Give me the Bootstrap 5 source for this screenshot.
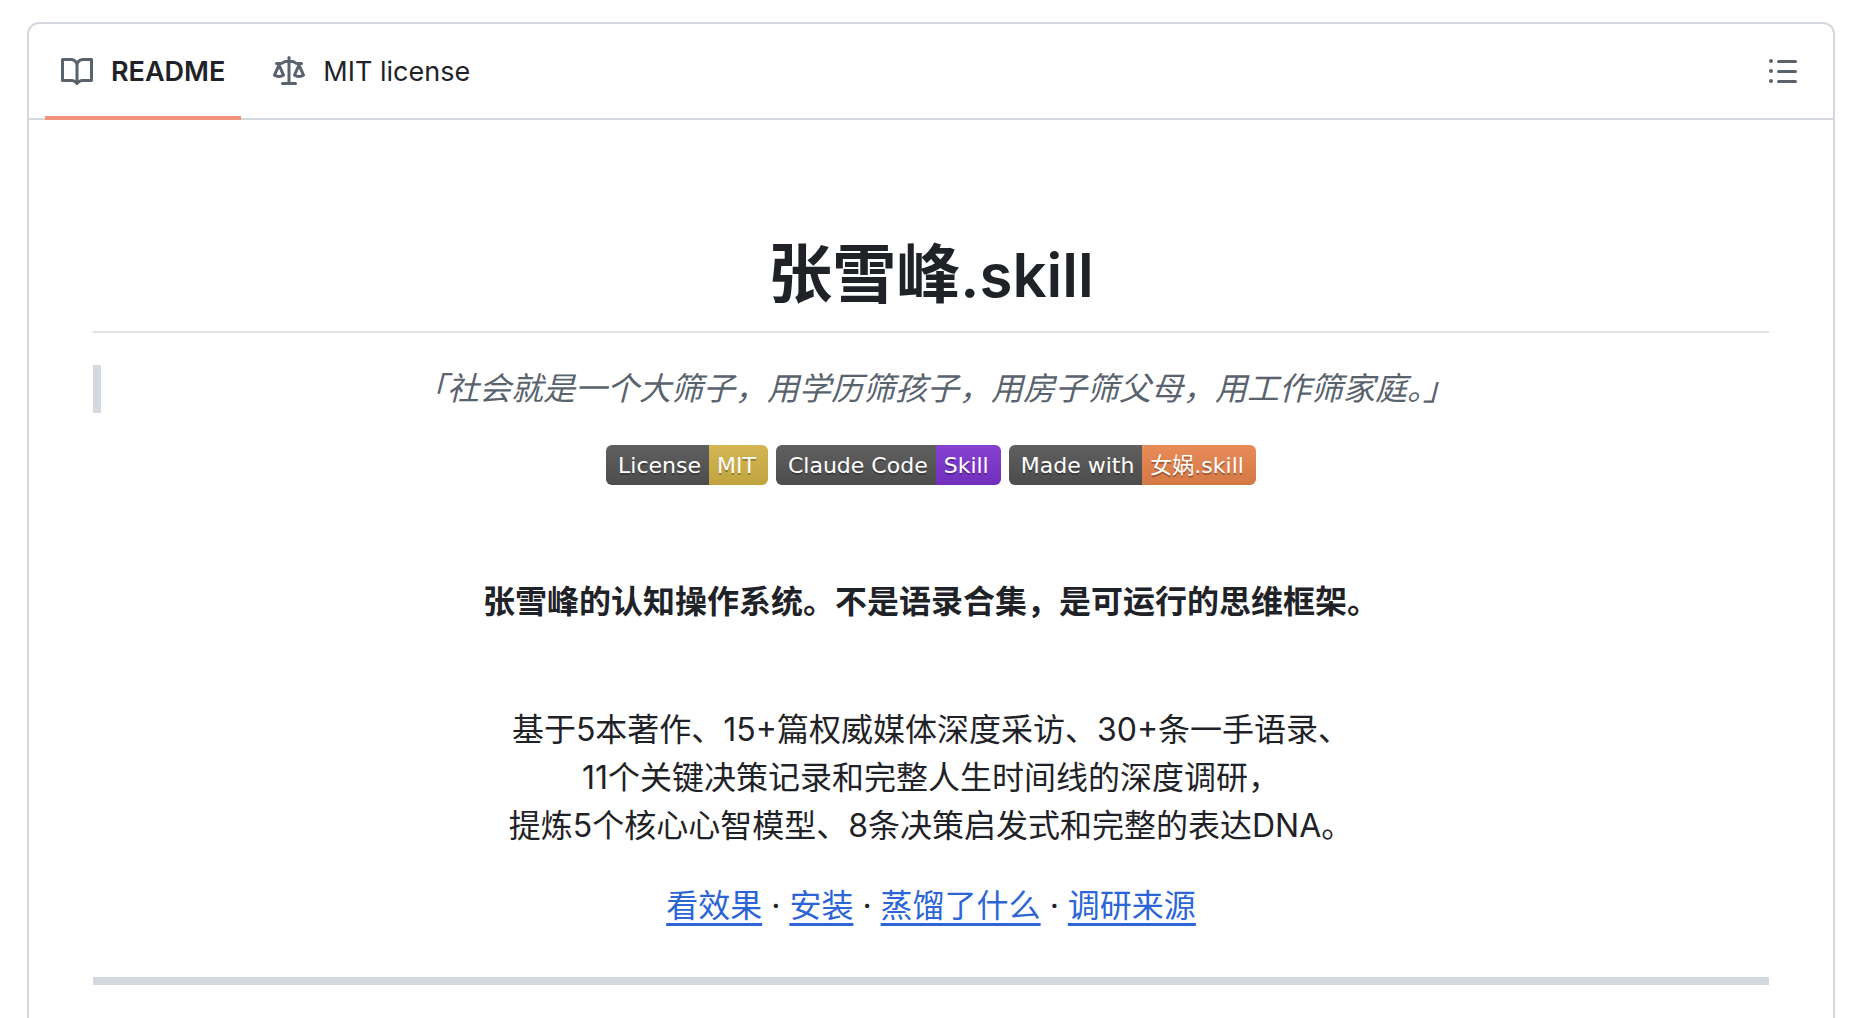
<!DOCTYPE html>
<html lang="zh-CN">
<head>
<meta charset="utf-8">
<meta name="viewport" content="width=device-width, initial-scale=1">
<title>张雪峰.skill</title>
<link href="https://cdn.jsdelivr.net/npm/bootstrap@5.3.0/dist/css/bootstrap.min.css" rel="stylesheet">
<style>
  body { font-family: Inter, "Noto Sans CJK SC", sans-serif; font-size: 32px; line-height: 48px; color: #1f2328; background: #fff; }
  .page-wrap { padding: 22px 25px 0 27px; }
  .readme-box { border: 2px solid #d3d9df; border-bottom: 0; border-radius: 12px 12px 0 0; }
  .readme-bar { border-bottom: 2px solid #d3d9df; padding: 0 34px 0 16px; }
  .readme-tab { display: flex; align-items: center; gap: 18px; height: 96px; margin-bottom: -2px; padding: 0 16px; border-bottom: 4px solid transparent; border-top: 4px solid transparent; font-size: 27px; line-height: 40px; color: #1f2328; text-decoration: none; }
  .readme-tab.active { font-weight: 600; border-bottom-color: #f1927a; }
  .oct { width: 32px; height: 32px; fill: #59636e; display: block; }
  .readme-body { padding: 114px 64px 0; text-align: center; }
  .readme-title { font-size: 64px; line-height: 80px; font-weight: 600; padding-bottom: 17px; border-bottom: 2px solid #dee2e7; margin-bottom: 32px; }
  .title-ext { font-size: 60px; line-height: 1; }
  .readme-quote { border-left: 8px solid #d3d9df; padding: 0 32px; color: #59636e; margin-bottom: 32px; }
  .shield { display: flex; height: 40px; border-radius: 6px; overflow: hidden; font: 22px/42px "DejaVu Sans", "Noto Sans CJK SC", sans-serif; color: #fff; text-decoration: none; text-shadow: 0 2px 0 rgba(1, 1, 1, .3); }
  .shield span { background-image: linear-gradient(rgba(187, 187, 187, .1), rgba(0, 0, 0, .1) 40px); }
  .shield-key { background-color: #555; padding: 0 8px 0 12px; }
  .shield-val { padding: 0 12px 0 8px; }
  .val-mit { background-color: #d6b647; }
  .val-skill { background-color: #7f34d3; }
  .val-maker { background-color: #ec864d; }
  .tagline { margin: 93px 0 80px; font-weight: 600; }
  .readme-links { margin: 32px 0 0; }
  .readme-links a { color: #2c66d6; text-decoration-thickness: 3px; text-underline-offset: 6px; text-decoration-skip-ink: none; }
  .readme-rule { height: 8px; background: #d3d9df; border: 0; opacity: 1; margin: 47px 0; }
</style>
</head>
<body>
<div class="page-wrap min-vh-100 d-flex flex-column">
  <main class="readme-box flex-grow-1">
    <div class="readme-bar d-flex justify-content-between align-items-center">
      <nav class="d-flex gap-3">
        <a class="readme-tab active" href="#readme" aria-current="page">
          <svg class="oct" viewBox="0 0 16 16" aria-hidden="true"><path d="M0 1.75A.75.75 0 0 1 .75 1h4.253c1.227 0 2.317.59 3 1.501A3.743 3.743 0 0 1 11.006 1h4.245a.75.75 0 0 1 .75.75v10.5a.75.75 0 0 1-.75.75h-4.507a2.25 2.25 0 0 0-1.591.659l-.622.621a.75.75 0 0 1-1.06 0l-.622-.621A2.25 2.25 0 0 0 5.258 13H.75a.75.75 0 0 1-.75-.75Zm7.251 10.324.004-5.073-.002-2.253A2.25 2.25 0 0 0 5.003 2.5H1.5v9h3.757a3.75 3.75 0 0 1 1.994.574ZM8.755 4.75l-.004 7.322a3.752 3.752 0 0 1 1.992-.572H14.5v-9h-3.495a2.25 2.25 0 0 0-2.25 2.25Z"/></svg>
          <span>README</span>
        </a>
        <a class="readme-tab" href="#license">
          <svg class="oct" viewBox="0 0 16 16" aria-hidden="true"><path d="M8.75.75V2h.985c.304 0 .603.08.867.231l1.29.736c.038.022.08.033.124.033h2.234a.75.75 0 0 1 0 1.5h-.427l2.111 4.692a.75.75 0 0 1-.154.838l-.53-.53.529.531-.001.002-.002.002-.006.006-.006.005-.01.01-.045.04c-.21.176-.441.327-.686.45C14.556 10.78 13.88 11 13 11a4.498 4.498 0 0 1-2.023-.454 3.544 3.544 0 0 1-.686-.45l-.045-.04-.016-.015-.006-.006-.004-.004v-.001a.75.75 0 0 1-.154-.838L12.178 4.5h-.162c-.305 0-.604-.079-.868-.231l-1.29-.736a.245.245 0 0 0-.124-.033H8.75V13h2.5a.75.75 0 0 1 0 1.5h-6.5a.75.75 0 0 1 0-1.5h2.5V3.5h-.984a.245.245 0 0 0-.124.033l-1.289.737c-.265.15-.564.23-.869.23h-.162l2.112 4.692a.75.75 0 0 1-.154.838l-.53-.53.529.531-.001.002-.002.002-.006.006-.016.015-.045.04c-.21.176-.441.327-.686.45C4.556 10.78 3.88 11 3 11a4.498 4.498 0 0 1-2.023-.454 3.544 3.544 0 0 1-.686-.45l-.045-.04-.016-.015-.006-.006-.004-.004v-.001a.75.75 0 0 1-.154-.838L2.178 4.5H1.75a.75.75 0 0 1 0-1.5h2.234a.249.249 0 0 0 .125-.033l1.288-.737c.265-.15.564-.23.869-.23h.984V.75a.75.75 0 0 1 1.5 0Zm2.945 8.477c.285.135.718.273 1.305.273s1.02-.138 1.305-.273L13 6.327Zm-10 0c.285.135.718.273 1.305.273s1.02-.138 1.305-.273L3 6.327Z"/></svg>
          <span>MIT license</span>
        </a>
      </nav>
      <button type="button" class="btn p-0 border-0" aria-label="Outline">
        <svg class="oct" viewBox="0 0 16 16" aria-hidden="true"><path d="M5.75 2.5h8.5a.75.75 0 0 1 0 1.5h-8.5a.75.75 0 0 1 0-1.5Zm0 5h8.5a.75.75 0 0 1 0 1.5h-8.5a.75.75 0 0 1 0-1.5Zm0 5h8.5a.75.75 0 0 1 0 1.5h-8.5a.75.75 0 0 1 0-1.5ZM2 14a1 1 0 1 1 0-2 1 1 0 0 1 0 2Zm1-6a1 1 0 1 1-2 0 1 1 0 0 1 2 0ZM2 4a1 1 0 1 1 0-2 1 1 0 0 1 0 2Z"/></svg>
      </button>
    </div>
    <article class="readme-body">
      <h1 class="readme-title">张雪峰<span class="title-ext">.skill</span></h1>
      <blockquote class="readme-quote"><em>「社会就是一个大筛子，用学历筛孩子，用房子筛父母，用工作筛家庭。」</em></blockquote>
      <div class="d-flex justify-content-center gap-2">
        <a class="shield" href="#license"><span class="shield-key">License</span><span class="shield-val val-mit">MIT</span></a>
        <a class="shield" href="#skill"><span class="shield-key">Claude Code</span><span class="shield-val val-skill">Skill</span></a>
        <a class="shield" href="#maker"><span class="shield-key">Made with</span><span class="shield-val val-maker">女娲.skill</span></a>
      </div>
      <p class="tagline">张雪峰的认知操作系统。不是语录合集，是可运行的思维框架。</p>
      <p class="mb-0">基于5本著作、15+篇权威媒体深度采访、30+条一手语录、<br>11个关键决策记录和完整人生时间线的深度调研，<br>提炼5个核心心智模型、8条决策启发式和完整的表达DNA。</p>
      <p class="readme-links"><a href="#demo">看效果</a> · <a href="#install">安装</a> · <a href="#content">蒸馏了什么</a> · <a href="#sources">调研来源</a></p>
      <hr class="readme-rule">
    </article>
  </main>
</div>
<script src="https://cdn.jsdelivr.net/npm/bootstrap@5.3.0/dist/js/bootstrap.bundle.min.js"></script>
</body>
</html>
